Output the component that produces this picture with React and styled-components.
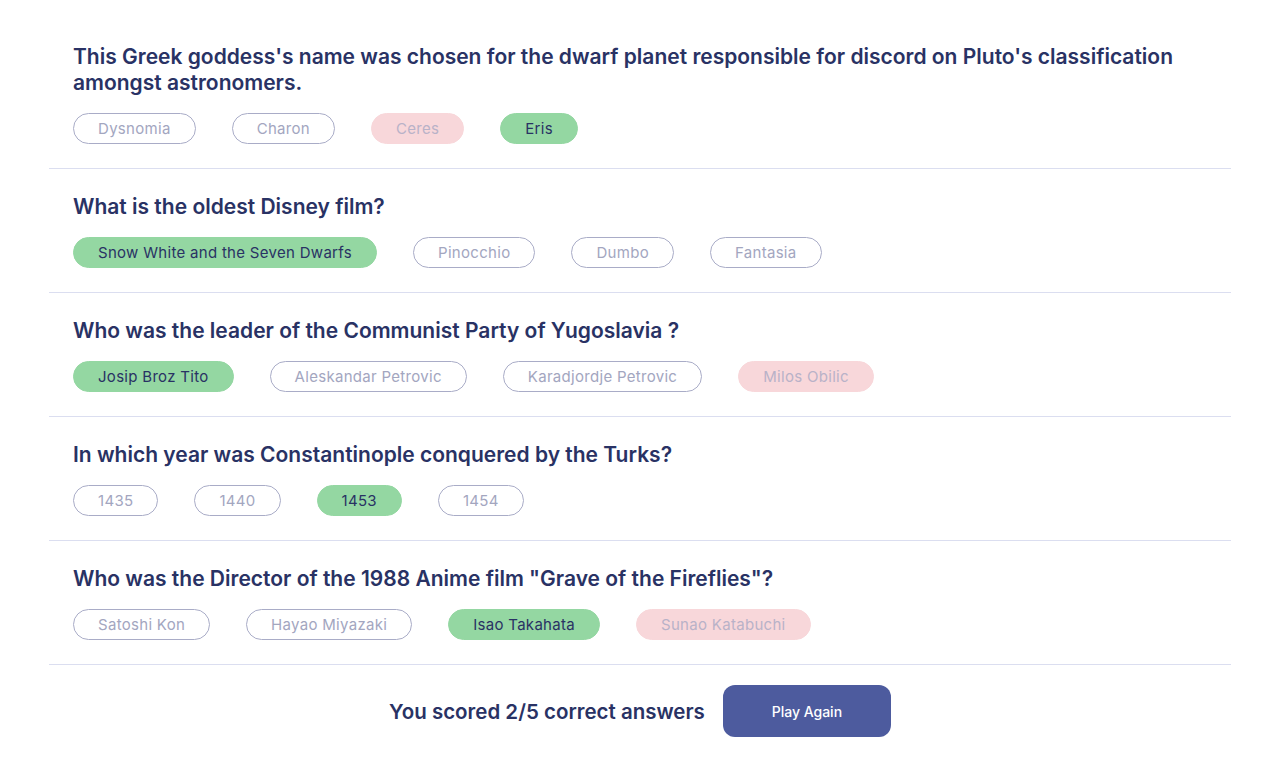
import React from 'react'
import styled, { createGlobalStyle } from 'styled-components'

const GlobalStyle = createGlobalStyle`
  body {
    margin: 0;
    background: #ffffff;
    font-family: Inter, "Open Sans", sans-serif;
  }
`

const questions = [
  {
    text: "This Greek goddess's name was chosen for the dwarf planet responsible for discord on Pluto's classification amongst astronomers.",
    answers: [
      { label: 'Dysnomia' },
      { label: 'Charon' },
      { label: 'Ceres', state: 'wrong' },
      { label: 'Eris', state: 'right' },
    ],
  },
  {
    text: 'What is the oldest Disney film?',
    answers: [
      { label: 'Snow White and the Seven Dwarfs', state: 'right' },
      { label: 'Pinocchio' },
      { label: 'Dumbo' },
      { label: 'Fantasia' },
    ],
  },
  {
    text: 'Who was the leader of the Communist Party of Yugoslavia ?',
    answers: [
      { label: 'Josip Broz Tito', state: 'right' },
      { label: 'Aleskandar Petrovic' },
      { label: 'Karadjordje Petrovic' },
      { label: 'Milos Obilic', state: 'wrong' },
    ],
  },
  {
    text: 'In which year was Constantinople conquered by the Turks?',
    answers: [
      { label: '1435' },
      { label: '1440' },
      { label: '1453', state: 'right' },
      { label: '1454' },
    ],
  },
  {
    text: 'Who was the Director of the 1988 Anime film "Grave of the Fireflies"?',
    answers: [
      { label: 'Satoshi Kon' },
      { label: 'Hayao Miyazaki' },
      { label: 'Isao Takahata', state: 'right' },
      { label: 'Sunao Katabuchi', state: 'wrong' },
    ],
  },
]

export default function App() {
  return (
    <Page>
      <GlobalStyle />
      {questions.map((q, i) => (
        <Question key={i}>
          <Title>{q.text}</Title>
          <Answers>
            {q.answers.map((a) => (
              <Pill key={a.label} $state={a.state}>{a.label}</Pill>
            ))}
          </Answers>
        </Question>
      ))}
      <Footer>
        <Score>You scored 2/5 correct answers</Score>
        <PlayButton>Play Again</PlayButton>
      </Footer>
    </Page>
  )
}

const Page = styled.div`
  width: 1182px;
  margin: 0 auto;
  padding-top: 19px;
`

const Question = styled.section`
  padding: 25px 24px 24px;
  border-bottom: 1px solid #dbdef0;
`

const Title = styled.h2`
  margin: 0 0 17px;
  font-family: Inter, sans-serif;
  font-size: 21px;
  line-height: 26px;
  font-weight: 600;
  color: #293264;
`

const Answers = styled.div`
  display: flex;
  gap: 36px;
`

const pillColors = {
  right: { bg: '#94d7a2', border: '#94d7a2', color: '#293264' },
  wrong: { bg: '#f8d7da', border: '#f8d7da', color: '#b9b2c8' },
}

const Pill = styled.button`
  height: 31px;
  padding: 0 24px;
  border-radius: 16px;
  font-family: Inter, sans-serif;
  font-size: 15px;
  letter-spacing: 0.3px;
  background: ${(p) => (pillColors[p.$state] ? pillColors[p.$state].bg : '#ffffff')};
  border: 1px solid ${(p) => (pillColors[p.$state] ? pillColors[p.$state].border : '#a9acc7')};
  color: ${(p) => (pillColors[p.$state] ? pillColors[p.$state].color : '#a3a6bf')};
  cursor: pointer;
`

const Footer = styled.div`
  display: flex;
  justify-content: center;
  align-items: center;
  gap: 18px;
  padding-top: 20px;
`

const Score = styled.span`
  font-family: Inter, sans-serif;
  font-size: 20.5px;
  font-weight: 600;
  color: #293264;
`

const PlayButton = styled.button`
  width: 168px;
  height: 52px;
  border: none;
  border-radius: 12px;
  background: #4d5b9e;
  color: #ffffff;
  font-family: Inter, sans-serif;
  font-size: 14px;
  font-weight: 500;
`
